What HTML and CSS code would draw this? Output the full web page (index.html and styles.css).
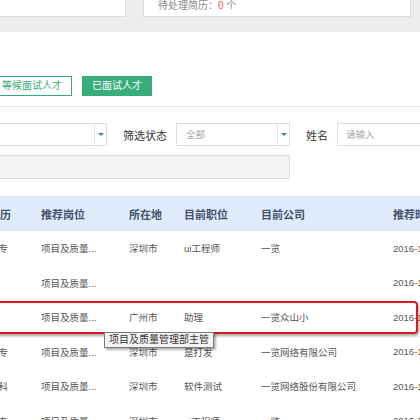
FILE: index.html
```html
<!DOCTYPE html>
<html lang="zh">
<head>
<meta charset="utf-8">
<title>面试人才</title>
<link rel="stylesheet" href="styles.css">
</head>
<body>
<div class="page">
    <div class="summary">
        <div class="card card_left"></div>
        <div class="card card_right">
            待处理简历：<span class="count">0</span> 个
        </div>
    </div>

    <div class="tabs">
        <button class="tab">等候面试人才</button>
        <button class="tab tab_on">已面试人才</button>
    </div>

    <div class="filters">
        <div class="select select_wide">
            <span class="select_text"></span>
            <span class="select_arrow"></span>
        </div>
        <label class="filter_label">筛选状态</label>
        <div class="select select_status">
            <span class="select_text">全部</span>
            <span class="select_arrow"></span>
        </div>
        <label class="filter_label">姓名</label>
        <div class="text_input">请输入</div>
    </div>

    <div class="disabled_box"></div>

    <div class="table_wrap">
        <table class="grid">
            <colgroup>
                <col style="width: 61px">
                <col style="width: 88px">
                <col style="width: 55px">
                <col style="width: 77px">
                <col style="width: 132px">
                <col style="width: 130px">
            </colgroup>
            <thead>
                <tr>
                    <th>学历</th>
                    <th>推荐岗位</th>
                    <th>所在地</th>
                    <th>目前职位</th>
                    <th>目前公司</th>
                    <th>推荐时间</th>
                </tr>
            </thead>
            <tbody>
                <tr>
                    <td>大专</td>
                    <td>项目及质量...</td>
                    <td>深圳市</td>
                    <td>ui工程师</td>
                    <td>一览</td>
                    <td>2016-11-15 10:23</td>
                </tr>
                <tr>
                    <td></td>
                    <td>项目及质量...</td>
                    <td></td>
                    <td></td>
                    <td></td>
                    <td>2016-11-15 10:20</td>
                </tr>
                <tr>
                    <td></td>
                    <td>项目及质量...</td>
                    <td>广州市</td>
                    <td>助理</td>
                    <td>一览众山小</td>
                    <td>2016-11-15 09:48</td>
                </tr>
                <tr>
                    <td>大专</td>
                    <td>项目及质量...</td>
                    <td>深圳市</td>
                    <td>是打发</td>
                    <td>一览网络有限公司</td>
                    <td>2016-11-14 17:32</td>
                </tr>
                <tr>
                    <td>本科</td>
                    <td>项目及质量...</td>
                    <td>深圳市</td>
                    <td>软件测试</td>
                    <td>一览网络股份有限公司</td>
                    <td>2016-11-14 16:05</td>
                </tr>
                <tr>
                    <td>大专</td>
                    <td>项目及质量...</td>
                    <td>深圳市</td>
                    <td>ui工程师</td>
                    <td>一览</td>
                    <td>2016-11-14 15:40</td>
                </tr>
            </tbody>
        </table>

        <div class="mark_row"></div>
        <div class="tip">项目及质量管理部主管</div>
    </div>
</div>
</body>
</html>
```

FILE: styles.css
```css
html, body {
    margin: 0;
    padding: 0;
    background-color: white;
    overflow: hidden;
}

body {
    width: 420px;
    height: 420px;
    font-family: "Liberation Sans", "Noto Sans CJK SC", sans-serif;
}

.page {
    width: 460px;
    margin-left: -20px;
}

/* top summary band */
.summary {
    display: flex;
    background-color: #ececec;
    padding: 0 29px 15px 0;
}

.card {
    height: 16px;
    background-color: white;
    border: 1px solid #d6dae2;
    border-top: none;
}

.card_left {
    width: 144px;
}

.card_right {
    flex: 1;
    margin-left: 17px;
    padding-left: 14px;
    font-size: 10px;
    line-height: 12px;
    color: #8a8a8a;
}

.count {
    color: #f0575a;
}

/* tabs */
.tabs {
    display: flex;
    gap: 10px;
    margin-top: 44px;
    padding: 0 0 10px 12px;
    border-bottom: 1px solid #e6e6e6;
}

.tab {
    height: 20px;
    padding: 0 9px;
    font-family: inherit;
    font-size: 10px;
    line-height: 18px;
    color: #39a977;
    background-color: white;
    border: 1px solid #39a977;
    border-radius: 0;
}

.tab_on {
    color: white;
    background-color: #38ac7b;
}

/* filters */
.filters {
    display: flex;
    align-items: center;
    margin-top: 16px;
    height: 23px;
}

.select {
    display: flex;
    flex-shrink: 0;
    height: 23px;
    box-sizing: border-box;
    border: 1px solid #d8dde6;
    background-color: white;
}

.select_text {
    flex: 1;
    padding-left: 9px;
    font-size: 9.5px;
    line-height: 21px;
    color: #a9a9a9;
}

.select_arrow {
    width: 11px;
    border-left: 1px solid #dfe3ea;
    position: relative;
}

.select_arrow::after {
    content: "";
    position: absolute;
    left: 3px;
    top: 9px;
    border-left: 3px solid transparent;
    border-right: 3px solid transparent;
    border-top: 3px solid #3b7bd4;
}

.select_wide {
    width: 127px;
}

.select_status {
    width: 114px;
}

.filter_label {
    flex-shrink: 0;
    white-space: nowrap;
    font-size: 11px;
    color: #333;
    margin: 0 9px 0 16px;
}

.text_input {
    flex-shrink: 0;
    width: 120px;
    height: 23px;
    box-sizing: border-box;
    border: 1px solid #d8dde6;
    padding-left: 8px;
    font-size: 9.5px;
    line-height: 21px;
    color: #a9a9a9;
}

.disabled_box {
    width: 310px;
    height: 24px;
    box-sizing: border-box;
    margin-top: 9px;
    background-color: #f3f3f3;
    border: 1px solid #dddddd;
}

/* table */
.table_wrap {
    position: relative;
    margin-top: 17px;
}

.grid {
    table-layout: fixed;
    border-collapse: collapse;
    width: 543px;
}

.grid th {
    height: 35px;
    padding: 0 0 0 9px;
    text-align: left;
    font-size: 11px;
    font-weight: bold;
    color: #45516e;
    background-color: #dfeafa;
}

.grid th + th, .grid td + td {
    padding-left: 0;
}

.grid td {
    height: 34.5px;
    padding: 0 0 0 9px;
    font-size: 9.5px;
    color: #555;
    white-space: nowrap;
    overflow: hidden;
}

.mark_row {
    position: absolute;
    left: -10px;
    top: 105px;
    width: 444px;
    height: 29px;
    border: 2px solid #d71920;
    border-radius: 4px;
    box-shadow: 1px 2px 3px rgba(0, 0, 0, 0.35);
}

.tip {
    position: absolute;
    left: 124px;
    top: 136px;
    padding: 0 4px;
    font-size: 10px;
    line-height: 14px;
    color: #333;
    background-color: #f4f4f4;
    border: 1px solid #7a7a7a;
    box-shadow: 2px 2px 2px rgba(0, 0, 0, 0.3);
}
```
